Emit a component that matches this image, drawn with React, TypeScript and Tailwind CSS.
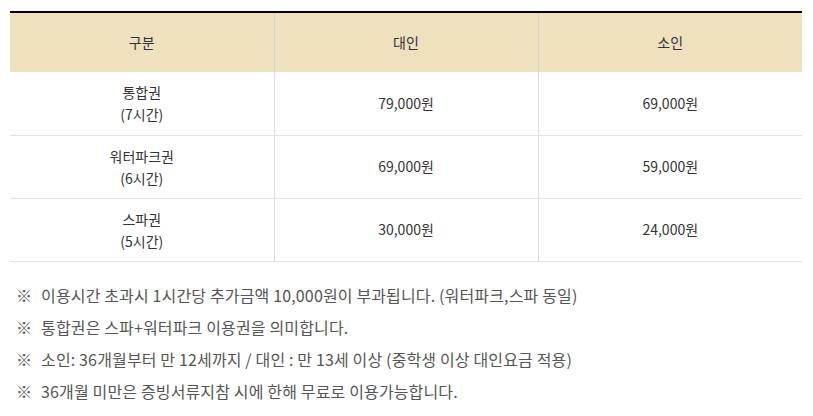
const rows = [
  { name: "통합권", hours: "(7시간)", adult: "79,000원", child: "69,000원" },
  { name: "워터파크권", hours: "(6시간)", adult: "69,000원", child: "59,000원" },
  { name: "스파권", hours: "(5시간)", adult: "30,000원", child: "24,000원" },
];

const notes = [
  "이용시간 초과시 1시간당 추가금액 10,000원이 부과됩니다. (워터파크,스파 동일)",
  "통합권은 스파+워터파크 이용권을 의미합니다.",
  "소인: 36개월부터 만 12세까지 / 대인 : 만 13세 이상 (중학생 이상 대인요금 적용)",
  "36개월 미만은 증빙서류지참 시에 한해 무료로 이용가능합니다.",
];

export default function App() {
  return (
    <div
      className="w-[813px] h-[416px] bg-white px-[10px] pt-[11px] text-[#333]"
      style={{ fontFamily: '"Noto Sans CJK KR", "Noto Sans", sans-serif' }}
    >
      <table className="w-[792px] table-fixed border-collapse border-t-2 border-black text-[14px]">
        <thead>
          <tr className="h-[60px] bg-[#efe0be]">
            <th className="w-[264px] font-normal border-r border-[#d4d4d4]">구분</th>
            <th className="w-[264px] font-normal border-r border-[#d4d4d4]">대인</th>
            <th className="w-[264px] font-normal">소인</th>
          </tr>
        </thead>
        <tbody>
          {rows.map((r) => (
            <tr key={r.name} className="h-[63px] border-b border-[#e2e2e2]">
              <td className="text-center leading-[22px] border-r border-[#dcdde2]">
                <div>{r.name}</div>
                <div>{r.hours}</div>
              </td>
              <td className="text-center border-r border-[#dcdde2]">{r.adult}</td>
              <td className="text-center">{r.child}</td>
            </tr>
          ))}
        </tbody>
      </table>

      <ul className="mt-[21px] pl-[6px] flex flex-col gap-[8px] text-[16px] leading-[24px] text-[#555]">
        {notes.map((n) => (
          <li key={n} className="flex gap-[9px]">
            <span>※</span>
            <span className="tracking-[0.15px]">{n}</span>
          </li>
        ))}
      </ul>
    </div>
  );
}
